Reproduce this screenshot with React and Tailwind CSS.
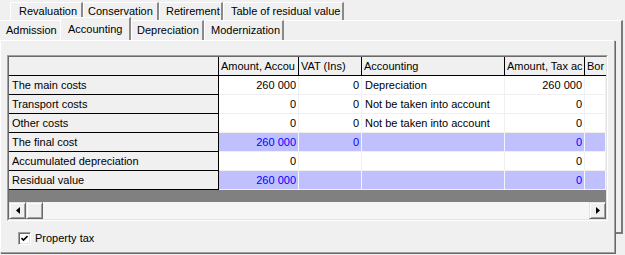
import React from "react";

const font = { fontFamily: '"Liberation Sans", Arial, sans-serif' };

function Tab({ w, pl, children, selected, first }) {
  return (
    <div
      className={
        "relative flex items-center border-t border-l border-t-white border-l-white border-r-2 border-r-[#8a8a8a] text-black " +
        (selected ? "z-10 h-[23px] -mt-[2px] bg-[#f0f0f0] rounded-tl-[2px]" : "h-full")
      }
      style={{ width: w, paddingLeft: pl }}
    >
      {children}
    </div>
  );
}

const rows = [
  { name: "The main costs", a: "260 000", v: "0", acc: "Depreciation", t: "260 000" },
  { name: "Transport costs", a: "0", v: "0", acc: "Not be taken into account", t: "0" },
  { name: "Other costs", a: "0", v: "0", acc: "Not be taken into account", t: "0" },
  { name: "The final cost", a: "260 000", v: "0", acc: "", t: "0", hl: true },
  { name: "Accumulated depreciation", a: "0", v: "", acc: "", t: "0" },
  { name: "Residual value", a: "260 000", v: "", acc: "", t: "0", hl: true },
];

function Arrow({ dir }) {
  return (
    <svg width="4" height="7" viewBox="0 0 4 7">
      {dir === "left" ? (
        <polygon points="4,0 0,3.5 4,7" fill="#000" />
      ) : (
        <polygon points="0,0 4,3.5 0,7" fill="#000" />
      )}
    </svg>
  );
}

function Btn({ children, w = 17 }) {
  return (
    <div
      className="h-[17px] flex items-center justify-center bg-[#f0f0f0] border border-t-[#e3e3e3] border-l-[#e3e3e3] border-r-[#696969] border-b-[#696969] shadow-[inset_1px_1px_0_#fff,inset_-1px_-1px_0_#a0a0a0]"
      style={{ width: w }}
    >
      {children}
    </div>
  );
}

export default function App() {
  return (
    <div
      className="relative w-[625px] h-[255px] bg-[#f0f0f0] overflow-hidden text-[11px] leading-none text-black"
      style={font}
    >
      {/* back sheet edge (behind front panel) */}
      <div className="absolute left-0 top-[20px] w-[623px] h-[214px] border-r-2 border-b-2 border-r-[#7a7a7a] border-b-[#7a7a7a] border-t border-t-white" />

      <div className="relative flex flex-col">
        {/* row 1 tabs */}
        <div className="flex h-[18px] mt-[2px] pl-[10px]">
          <Tab w={73} pl={8}>Revaluation</Tab>
          <Tab w={76} pl={4}>Conservation</Tab>
          <Tab w={64} pl={6}>Retirement</Tab>
          <Tab w={121} pl={7}>Table of residual value</Tab>
        </div>
        {/* row 2 tabs */}
        <div className="flex h-[20px] items-end">
          <div className="flex items-center h-[20px] w-[60px] pl-[6px] border-t border-t-white">Admission</div>
          <Tab w={71} pl={7} selected>Accounting</Tab>
          <Tab w={73} pl={5}>Depreciation</Tab>
          <Tab w={80} pl={6}>Modernization</Tab>
        </div>

        {/* front panel */}
        <div className="w-[615px] h-[213px] border-t border-l border-t-white border-l-white border-r border-b border-r-[#a0a0a0] border-b-[#a0a0a0] shadow-[1px_1px_0_#696969] bg-[#f0f0f0] flex flex-col">
          {/* grid */}
          <div className="ml-[6px] mt-[14px] w-[601px] border border-t-[#a0a0a0] border-l-[#a0a0a0] border-r-white border-b-white">
            <div className="border border-t-[#696969] border-l-[#696969] border-r-[#e3e3e3] border-b-[#e3e3e3] flex flex-col">
              <div className="grid grid-cols-[210px_80px_63px_143px_80px_21px] overflow-hidden">
                {/* header */}
                <div className="h-[19px] border-r border-b border-black bg-[#f0f0f0]" />
                <div className="h-[19px] border-r border-b border-black bg-[#f0f0f0] flex items-center pl-[2px] whitespace-nowrap overflow-hidden">Amount, Accou</div>
                <div className="h-[19px] border-r border-b border-black bg-[#f0f0f0] flex items-center pl-[2px] whitespace-nowrap overflow-hidden">VAT (Ins)</div>
                <div className="h-[19px] border-r border-b border-black bg-[#f0f0f0] flex items-center pl-[2px] whitespace-nowrap overflow-hidden">Accounting</div>
                <div className="h-[19px] border-r border-b border-black bg-[#f0f0f0] flex items-center pl-[2px] whitespace-nowrap overflow-hidden">Amount, Tax ac</div>
                <div className="h-[19px] border-b border-black bg-[#f0f0f0] flex items-center pl-[2px] whitespace-nowrap overflow-hidden">Bor</div>
                {rows.map((r, i) => {
                  const dc = r.hl
                    ? "bg-[#c0c0ff] text-[#0000ff] border-r border-b border-r-[#f4f4ff] border-b-[#f0f0f0]"
                    : "bg-white border-r border-b border-[#f0f0f0]";
                  return (
                    <React.Fragment key={i}>
                      <div className="h-[19px] border-r border-b border-black bg-[#f0f0f0] flex items-center pl-[3px] whitespace-nowrap">{r.name}</div>
                      <div className={"h-[19px] flex items-center justify-end pr-[2px] " + dc}>{r.a}</div>
                      <div className={"h-[19px] flex items-center justify-end pr-[2px] " + dc}>{r.v}</div>
                      <div className={"h-[19px] flex items-center pl-[3px] whitespace-nowrap overflow-hidden text-black " + dc}>{r.acc}</div>
                      <div className={"h-[19px] flex items-center justify-end pr-[2px] " + dc}>{r.t}</div>
                      <div className={"h-[19px] " + dc} />
                    </React.Fragment>
                  );
                })}
              </div>
              <div className="h-[12px] bg-[#808080]" />
              {/* scrollbar */}
              <div className="h-[17px] flex bg-[#f6f6f6]">
                <Btn><Arrow dir="left" /></Btn>
                <Btn />
                <div className="flex-1" />
                <Btn><Arrow dir="right" /></Btn>
              </div>
            </div>
          </div>

          {/* checkbox */}
          <div className="flex items-center mt-[11px] ml-[17px] gap-[4px]">
            <div className="w-[13px] h-[13px] bg-white border border-t-[#a0a0a0] border-l-[#a0a0a0] border-r-white border-b-white shadow-[inset_1px_1px_0_#696969,inset_-1px_-1px_0_#e3e3e3] flex items-center justify-center">
              <svg width="7" height="7" viewBox="0 0 7 7">
                <polyline points="0.5,3 2.5,5 6.5,1" fill="none" stroke="#000" strokeWidth="1.6" />
              </svg>
            </div>
            <span>Property tax</span>
          </div>
        </div>
      </div>
    </div>
  );
}
